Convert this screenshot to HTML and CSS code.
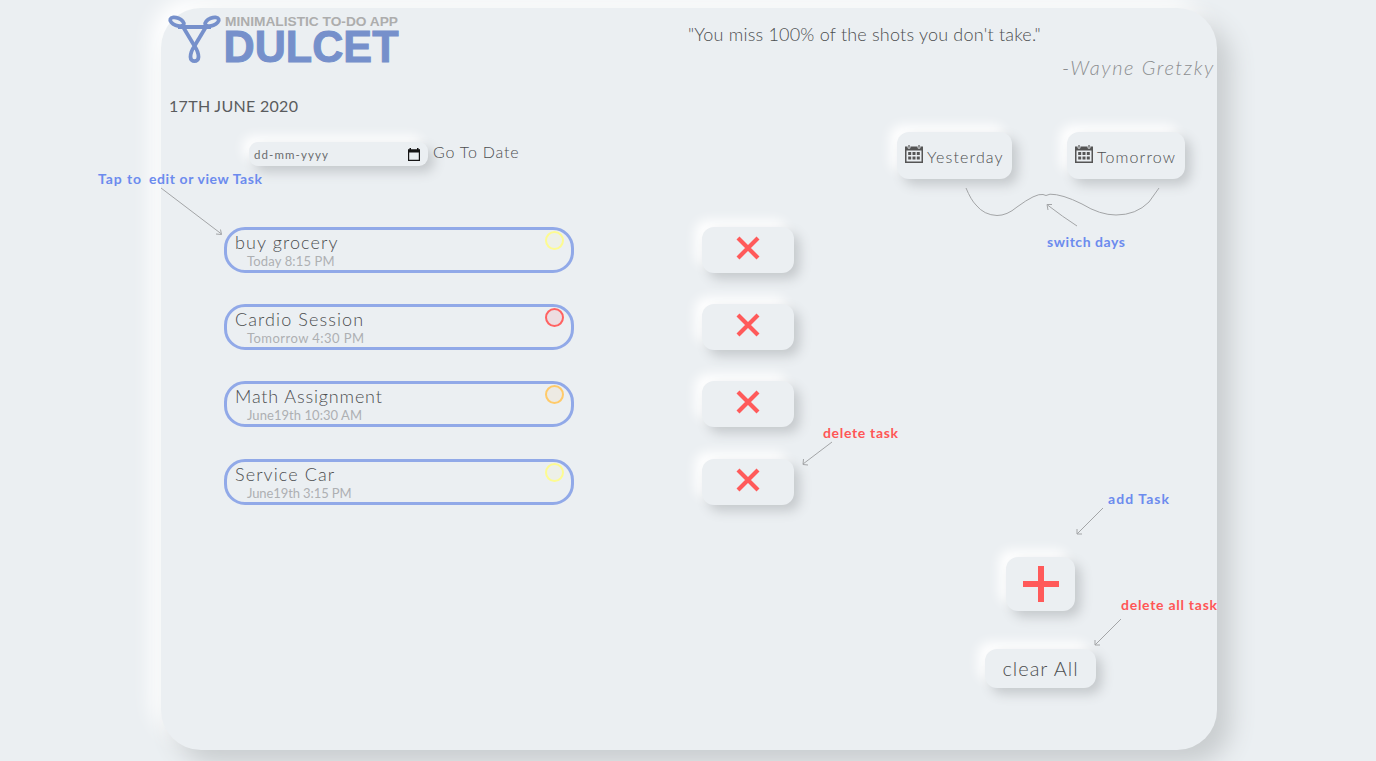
FILE: index.html
```html
<!DOCTYPE html>
<html lang="en">
<head>
<meta charset="utf-8">
<title>Dulcet</title>
<link rel="stylesheet" href="styles.css">
</head>
<body>
<svg class="defs" width="0" height="0">
  <symbol id="calendar" viewBox="0 0 18 18">
    <path fill-rule="evenodd" d="M0 1.500H18V18H0ZM1.500 5.500V16.500H16.500V5.500Z"/>
    <path d="M3 0V3.200H5V0M13 0V3.200H15V0" stroke="#ebeff2" stroke-width=".8"/>
    <path d="M3.200 7h3v3h-3zM7.500 7h3v3h-3zM11.800 7h3v3h-3zM3.200 11.600h3v3h-3zM7.500 11.600h3v3h-3zM11.800 11.600h3v3h-3z"/>
  </symbol>
  <symbol id="cross" viewBox="0 0 24 24"><path d="M2 2L22 22M22 2L2 22" stroke="#ff5a5a" stroke-width="4.2"/></symbol>
</svg>
<main class="card">
  <header class="header">
    <svg class="logo" viewBox="0 0 232 50" width="232" height="50">
      <g fill="none" stroke="#7690cb" stroke-width="3.800" stroke-linejoin="round">
        <path d="M10 12H43"/>
        <path d="M26.500 31C23 36 22.500 38 22.500 42C22.500 47.500 30.500 47.500 30.500 42C30.500 38 30 36 26.500 31L14.500 11"/>
        <path d="M26.500 31L38.500 11"/>
        <ellipse cx="9" cy="6.800" rx="7.200" ry="3.800" transform="rotate(22 9 6.800)"/>
        <ellipse cx="44" cy="6.800" rx="7.200" ry="3.800" transform="rotate(-22 44 6.800)"/>
      </g>
      <text class="logo-tag" x="57" y="11" textLength="173" lengthAdjust="spacingAndGlyphs">MINIMALISTIC TO-DO APP</text>
      <text class="logo-name" x="55.500" y="47" textLength="175" lengthAdjust="spacingAndGlyphs">DULCET</text>
    </svg>
    <blockquote class="quote">
      <p class="quote-text">"You miss 100% of the shots you don't take."</p>
      <cite class="quote-author">-Wayne Gretzky</cite>
    </blockquote>
  </header>
  <h1 class="today">17TH JUNE 2020</h1>
  <section class="toolbar">
    <div class="date-field"><span>dd-mm-yyyy</span>
      <svg width="12" height="13" viewBox="0 0 12 13"><path fill-rule="evenodd" d="M0 1.200H1.500V0H3V1.200H9V0H10.500V1.200H12V13H0ZM1.200 4.400V11.800H10.800V4.400Z"/></svg>
    </div>
    <span class="go">Go To Date</span>
    <div class="days">
      <button class="raised day yesterday"><svg class="cal"><use href="#calendar"/></svg><span>Yesterday</span></button>
      <button class="raised day tomorrow"><svg class="cal"><use href="#calendar"/></svg><span>Tomorrow</span></button>
    </div>
  </section>
  <section class="tasks">
    <article class="task"><div class="task-body"><b class="t1">buy grocery</b><small class="s1">Today 8:15 PM</small></div><i class="dot yellow"></i></article>
    <button class="raised delete"><svg class="x"><use href="#cross"/></svg></button>
    <article class="task"><div class="task-body"><b class="t2">Cardio Session</b><small class="s2">Tomorrow 4:30 PM</small></div><i class="dot red"></i></article>
    <button class="raised delete"><svg class="x"><use href="#cross"/></svg></button>
    <article class="task"><div class="task-body"><b class="t3">Math Assignment</b><small class="s3">June19th 10:30 AM</small></div><i class="dot orange"></i></article>
    <button class="raised delete"><svg class="x"><use href="#cross"/></svg></button>
    <article class="task"><div class="task-body"><b class="t4">Service Car</b><small class="s4">June19th 3:15 PM</small></div><i class="dot yellow"></i></article>
    <button class="raised delete"><svg class="x"><use href="#cross"/></svg></button>
  </section>
  <footer class="actions">
    <button class="raised add"><svg width="36" height="36" viewBox="0 0 36 36"><path d="M18 0V36M0 18H36" stroke="#ff5a5a" stroke-width="6"/></svg></button>
    <button class="raised clear">clear All</button>
  </footer>
</main>
<svg class="notes" width="1376" height="761" viewBox="0 0 1376 761">
  <g fill="none" stroke="#a3a5a7" stroke-width="1">
    <path d="M161 188L221.500 234M220.500 229.500L221.500 234.500L216 234"/>
    <path d="M966 188Q971 200 976 205Q984 215 997 215.500Q1007 215.500 1017 207Q1036 193 1043 194.500L1046 195.500L1050 194.200Q1062 194 1082 204Q1100 215 1116 215Q1136 215 1149 202L1159 188"/>
    <path d="M1077 226Q1063 217 1047.500 205M1052 204.500H1047L1048 210"/>
    <path d="M832 442L803 464M803.500 459L803 464.500L808 465"/>
    <path d="M1103 508L1077 534M1077 529V534H1082"/>
    <path d="M1121 619L1095 645M1095 640V645H1100"/>
  </g>
  <g class="blue">
    <text x="98" y="184" textLength="43">Tap to</text>
    <text x="149" y="184" textLength="113">edit or view Task</text>
    <text x="1047" y="247" textLength="78">switch days</text>
    <text x="1108" y="504" textLength="61">add Task</text>
  </g>
  <g class="coral">
    <text x="823" y="438" textLength="75">delete task</text>
    <text x="1121" y="610" textLength="96">delete all task</text>
  </g>
</svg>
</body>
</html>
```
FILE: styles.css
```css
* { box-sizing: border-box; margin: 0; padding: 0; }
body {
  height: 761px;
  overflow: hidden;
  padding: 8px 159px 11px 161px;
  background: #ebeff2;
  color: #4c4e50;
  font-family: Lato, sans-serif;
  font-weight: 300;
}
.defs { position: absolute; }
.card {
  height: 742px;
  border-radius: 40px;
  background: #ebeff2;
  box-shadow: 14px 14px 24px #c9cdcf, -10px -10px 20px #fff;
}
.header { display: flex; justify-content: space-between; height: 85px; padding: 7px 3px 0 7px; }
.logo { flex: none; overflow: visible; }
.logo-tag { font: 700 13px "Liberation Sans", sans-serif; fill: #adadad; }
.logo-name { font: 700 44px "Liberation Sans", sans-serif; fill: #7690cb; stroke: #7690cb; stroke-width: 1px; }
.quote { width: 526px; }
.quote-text { height: 34px; padding-top: 6px; font-size: 18px; line-height: 26px; letter-spacing: .2px; white-space: nowrap; }
.quote-author { display: block; margin-top: 3px; text-align: right; font-size: 20px; line-height: 30px; letter-spacing: 1.6px; margin-right: -1px; color: #8c8e90; }
.today { padding-left: 8px; font-size: 16px; line-height: 26px; font-weight: 400; letter-spacing: .3px; color: #5a5c5e; }
.toolbar { display: flex; align-items: flex-start; height: 107.5px; padding: 13px 32px 0 88px; }
.date-field {
  display: flex; align-items: center; justify-content: space-between;
  width: 179px; height: 24px; margin-top: 10px; padding: 0 8px 0 5px;
  border-radius: 9px; background: #ebeff2;
  color: #6a6c6e; font-size: 11.5px; font-weight: 400; letter-spacing: 1.1px;
  box-shadow: 6px 6px 12px #c5c9cc, -6px -6px 12px #fff;
}
.date-field svg { fill: #151515; }
.go { margin: 9px 0 0 5px; font-size: 16px; line-height: 22px; letter-spacing: .8px; }
.days { display: flex; gap: 55px; margin-left: auto; }
.raised {
  display: flex; align-items: center; justify-content: center;
  border: 0; border-radius: 12px; background: #ebeff2; color: #4c4e50;
  font-family: inherit; font-weight: 300;
  box-shadow: 6px 6px 12px #c5c9cc, -7px -7px 12px #fff;
}
.day { height: 47px; font-size: 16px; letter-spacing: 1.15px; justify-content: flex-start; padding-left: 8px; gap: 4px; }
.day span { padding-top: 2px; }
.yesterday { width: 115px; }
.tomorrow { width: 118px; }
.cal { width: 18px; height: 18px; fill: #555; margin-bottom: 3px; }
.tasks { display: grid; grid-template-columns: 350px 92px; grid-auto-rows: 46px; column-gap: 128px; row-gap: 31.4px; padding-left: 63px; height: 330.5px; }
.task { display: flex; justify-content: space-between; border: 3px solid #91a9e8; border-radius: 21px; padding: 1px 7px 0 8px; }
.task-body { display: flex; flex-direction: column; }
.task b { font-size: 18px; font-weight: 300; line-height: 23px; letter-spacing: 1.1px; }
.task .t3 { letter-spacing: .85px; }
.task small { padding-left: 12px; font-size: 13px; font-weight: 400; line-height: 14px; color: #aeb0b2; letter-spacing: .15px; }
.task .s2 { letter-spacing: .45px; }
.task .s3 { letter-spacing: .05px; }
.task .s4 { letter-spacing: -.1px; }
.dot { width: 19px; height: 19px; border: 2px solid; border-radius: 50%; }
.yellow { color: #fdfb91; background: #edf0e8; }
.red { color: #ff6262; background: #eddde1; }
.orange { color: #ffca69; background: #edeae3; }
.x { width: 24px; height: 24px; margin-bottom: 4px; }
.actions { display: flex; flex-direction: column; width: 111px; margin-left: 824px; align-items: center; gap: 38px; }
.add { width: 69px; height: 54px; }
.clear { width: 111px; height: 39px; padding-bottom: 1px; font-size: 20px; letter-spacing: 1px; }
.notes { position: absolute; left: 0; top: 0; }
.notes text { font: 700 14px Lato, sans-serif; }
.blue { fill: #6c8bee; }
.coral { fill: #ff5656; }
```
